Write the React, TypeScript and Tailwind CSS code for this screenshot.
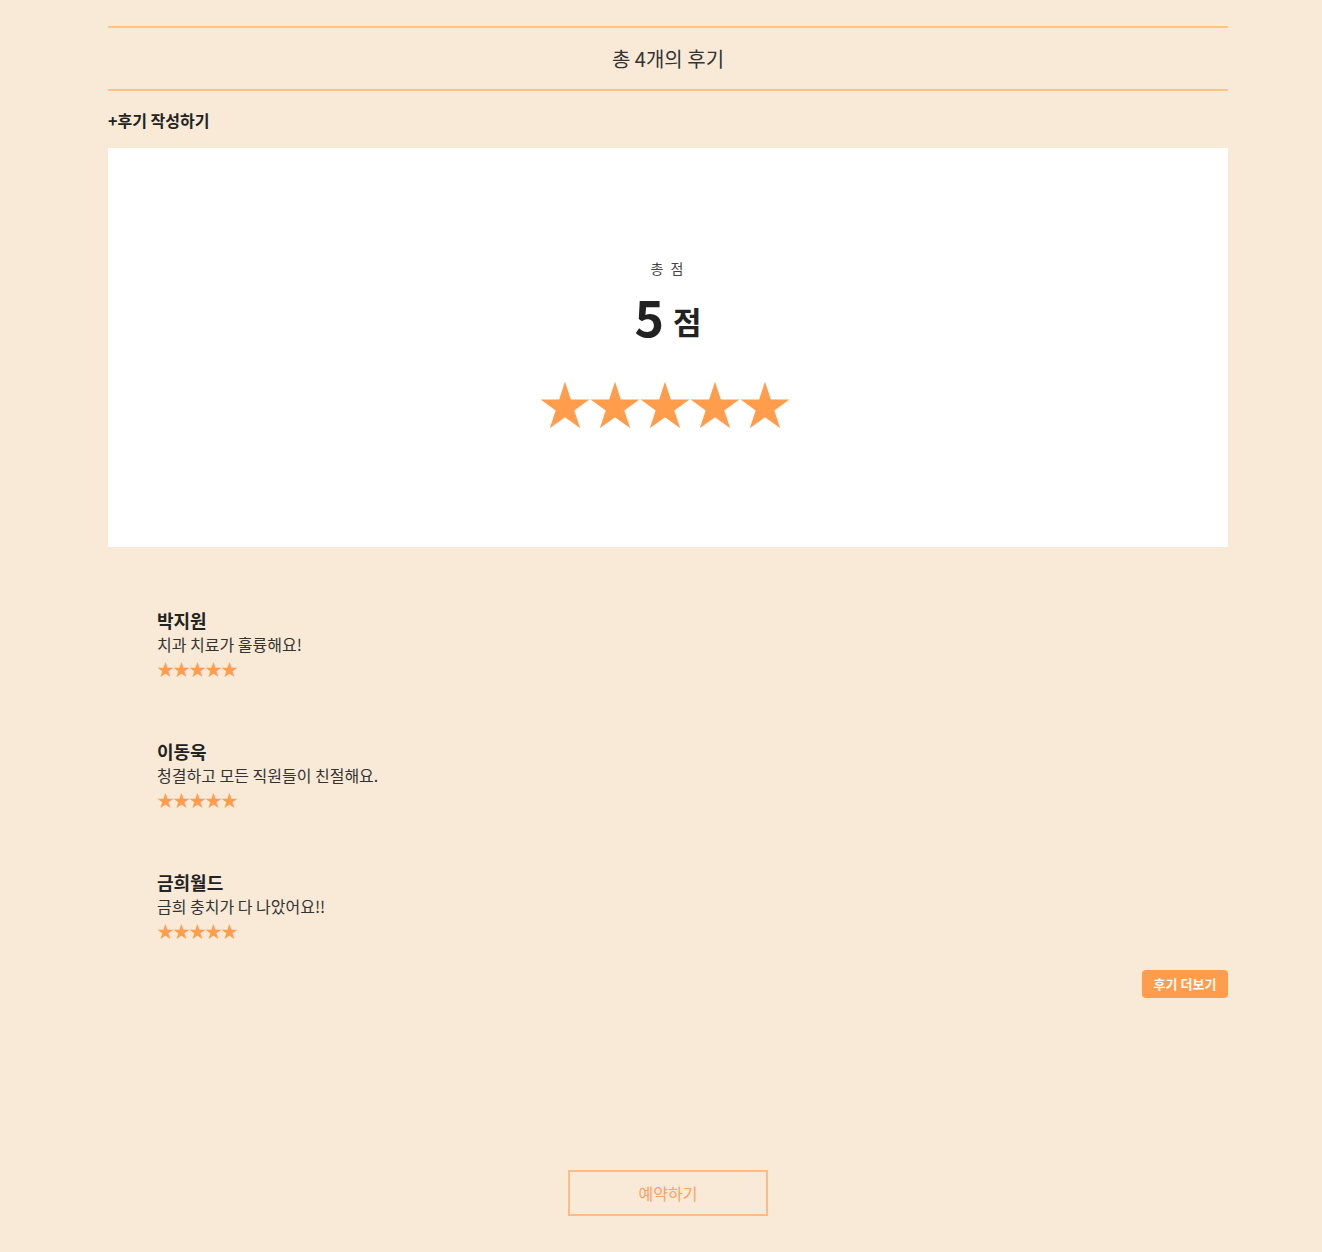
const reviews = [
  { name: '박지원', text: '치과 치료가 훌륭해요!' },
  { name: '이동욱', text: '청결하고 모든 직원들이 친절해요.' },
  { name: '금희월드', text: '금희 충치가 다 나았어요!!' },
];

function Stars({ className }: { className: string }) {
  return <div className={className}>★★★★★</div>;
}

export default function App() {
  return (
    <div
      className="min-h-[1252px] w-full bg-[#f8ead7] text-[#222]"
      style={{ fontFamily: '"Noto Sans CJK KR", "Noto Sans", sans-serif' }}
    >
      <div className="ml-[108px] w-[1120px] pt-[26px]">
        <div className="flex h-[65px] items-center justify-center border-y-2 border-[#ffc57f]">
          <h2 className="text-[20px] text-[#333]">총 4개의 후기</h2>
        </div>
        <div className="pt-[19px] pb-[18px] text-[16px] font-bold leading-[20px]">+후기 작성하기</div>

        <section className="flex h-[399px] flex-col items-center bg-white pt-[110px]">
          <div className="text-[14px] leading-[20px] tracking-[2px] text-[#444]">총 점</div>
          <div className="mt-[12px] flex items-end gap-[9px] leading-none">
            <span className="text-[50px] font-bold">5</span>
            <span className="mb-[4px] text-[31px] font-bold">점</span>
          </div>
          <Stars className="mt-[37px] mr-[8px] text-[52px] leading-none tracking-[-2px] text-[#ff9d4d]" />
        </section>

        <div className="flex flex-col gap-[57px] px-[49px] pt-[61px]">
          {reviews.map((r) => (
            <div key={r.name} className="flex flex-col">
              <div className="text-[18px] font-bold leading-[24px]">{r.name}</div>
              <div className="text-[16px] leading-[24px] text-[#333]">{r.text}</div>
              <Stars className="text-[17px] leading-[26px] tracking-[-1px] text-[#ff9d4d]" />
            </div>
          ))}
        </div>

        <div className="mt-[26px] flex justify-end">
          <button className="h-[28px] w-[86px] rounded-[4px] bg-[#ff9d4d] text-[13px] font-bold text-white">
            후기 더보기
          </button>
        </div>

        <div className="flex justify-center pt-[172px] pb-[36px]">
          <button className="h-[46px] w-[200px] border-2 border-[#ffbb85] text-[16px] text-[#ff9f62]">
            예약하기
          </button>
        </div>
      </div>
    </div>
  );
}
